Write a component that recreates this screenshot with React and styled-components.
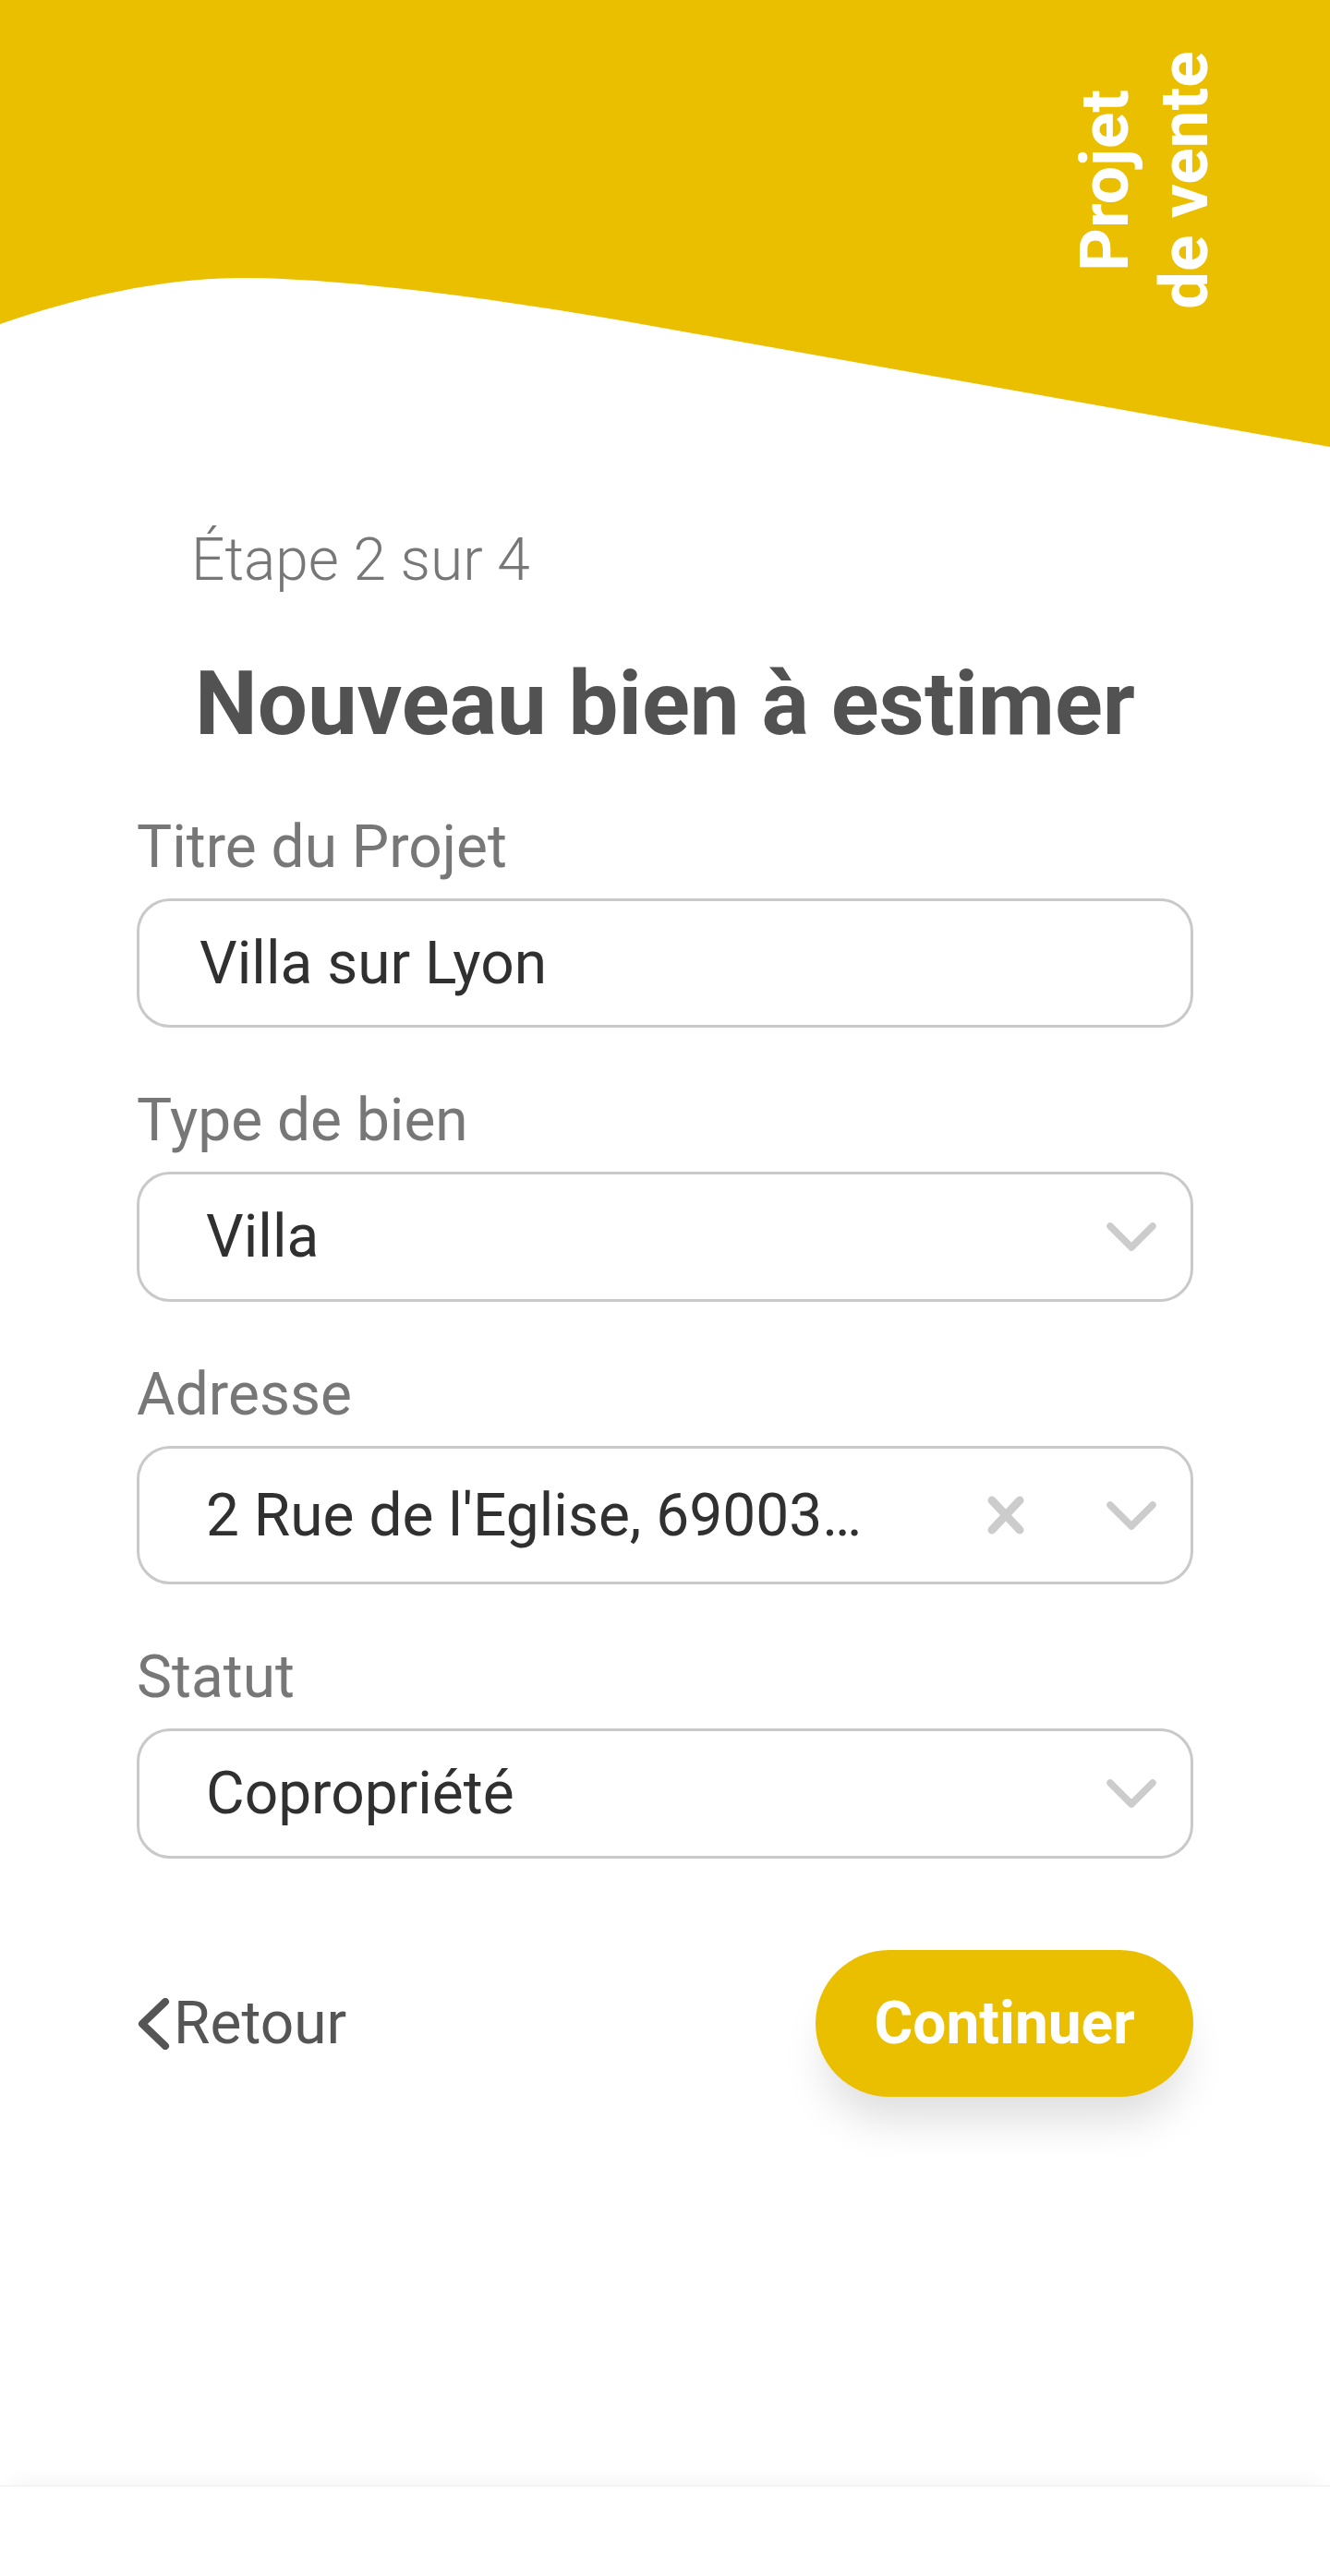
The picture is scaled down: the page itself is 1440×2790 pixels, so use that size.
import styled, { createGlobalStyle } from "styled-components";

const YELLOW = "#EABF00";

const GlobalStyle = createGlobalStyle`
  * { box-sizing: border-box; }
  body {
    margin: 0;
    background: #fff;
    font-family: Roboto, "Noto Sans", sans-serif;
  }
`;

export default function App() {
  return (
    <>
      <GlobalStyle />
      <Page>
        <Header>
          <Wave viewBox="0 0 1440 490" preserveAspectRatio="none">
            <path
              d="M0 0 H1440 V484 L700 352 C520 320 360 301 264 301 C180 301 90 320 0 351 Z"
              fill={YELLOW}
            />
          </Wave>
          <SideTitle>
            Projet
            <br />
            de vente
          </SideTitle>
        </Header>

        <Main>
          <Step>Étape 2 sur 4</Step>
          <Title>Nouveau bien à estimer</Title>

          <Form>
            <Field>
              <Label>Titre du Projet</Label>
              <TextInput value="Villa sur Lyon" readOnly />
            </Field>

            <Field>
              <Label>Type de bien</Label>
              <SelectBox>
                <SelectValue>Villa</SelectValue>
                <Chevron />
              </SelectBox>
            </Field>

            <Field>
              <Label>Adresse</Label>
              <SelectBox $tall>
                <SelectValue>2 Rue de l'Eglise, 69003…</SelectValue>
                <ClearIcon />
                <Chevron />
              </SelectBox>
            </Field>

            <Field>
              <Label>Statut</Label>
              <SelectBox>
                <SelectValue>Copropriété</SelectValue>
                <Chevron />
              </SelectBox>
            </Field>
          </Form>

          <Actions>
            <BackButton>
              <svg width="36" height="56" viewBox="0 0 36 56">
                <polyline
                  points="31,4 6,28 31,52"
                  fill="none"
                  stroke="#555"
                  strokeWidth="8"
                  strokeLinecap="round"
                  strokeLinejoin="round"
                />
              </svg>
              Retour
            </BackButton>
            <ContinueButton>Continuer</ContinueButton>
          </Actions>
        </Main>

        <Footer />
      </Page>
    </>
  );
}

function Chevron() {
  return (
    <ChevronSvg width="60" height="33" viewBox="0 0 60 33">
      <polyline
        points="7,5 30,28 53,5"
        fill="none"
        stroke="#cccccc"
        strokeWidth="7.5"
        strokeLinecap="round"
        strokeLinejoin="round"
      />
    </ChevronSvg>
  );
}

function ClearIcon() {
  return (
    <ClearSvg width="40" height="42" viewBox="0 0 40 42">
      <g stroke="#cccccc" strokeWidth="9" strokeLinecap="round">
        <line x1="5" y1="5" x2="35" y2="37" />
        <line x1="35" y1="5" x2="5" y2="37" />
      </g>
    </ClearSvg>
  );
}

const Page = styled.div`
  min-height: 2790px;
  display: flex;
  flex-direction: column;
  background: #fff;
`;

const Header = styled.header`
  position: relative;
  height: 490px;
`;

const Wave = styled.svg`
  display: block;
  width: 100%;
  height: 490px;
`;

const SideTitle = styled.div`
  position: absolute;
  left: 1153px;
  top: 42px;
  height: 306px;
  writing-mode: vertical-rl;
  transform: rotate(180deg);
  text-align: center;
  color: #fff;
  font-weight: 700;
  font-size: 73px;
  line-height: 86px;
`;

const Main = styled.main`
  padding: 79px 148px 0;
  display: flex;
  flex-direction: column;
`;

const Step = styled.p`
  margin: 0;
  padding-left: 59px;
  font-weight: 300;
  font-size: 64px;
  line-height: 75px;
  color: #777;
`;

const Title = styled.h1`
  margin: 62px 0 62px;
  text-align: center;
  font-weight: 700;
  font-size: 96px;
  line-height: 112px;
  color: #525252;
`;

const Form = styled.div`
  display: flex;
  flex-direction: column;
  gap: 63px;
`;

const Field = styled.div`
  display: flex;
  flex-direction: column;
`;

const Label = styled.label`
  font-size: 64px;
  line-height: 75px;
  color: #777;
  margin-bottom: 18px;
`;

const TextInput = styled.input`
  height: 140px;
  width: 100%;
  border: 3px solid #c9c9c9;
  border-radius: 36px;
  padding: 0 40px 0 65px;
  font-family: Roboto, "Noto Sans", sans-serif;
  font-size: 64px;
  color: #303030;
  background: #fff;
  outline: none;
`;

const SelectBox = styled.div`
  height: ${(p) => (p.$tall ? "150px" : "141px")};
  border: 3px solid #c9c9c9;
  border-radius: 36px;
  padding: 0 34px 0 72px;
  display: flex;
  align-items: center;
`;

const SelectValue = styled.span`
  flex: 1;
  font-size: 64px;
  color: #303030;
  white-space: nowrap;
  overflow: hidden;
`;

const ClearSvg = styled.svg`
  flex-shrink: 0;
  margin: 0 86px 0 20px;
`;

const ChevronSvg = styled.svg`
  flex-shrink: 0;
  display: block;
`;

const Actions = styled.div`
  margin-top: 99px;
  display: flex;
  justify-content: space-between;
  align-items: center;
`;

const BackButton = styled.button`
  display: flex;
  align-items: center;
  gap: 4px;
  padding: 0;
  border: none;
  background: none;
  font-family: Roboto, "Noto Sans", sans-serif;
  font-size: 64px;
  color: #555;
  cursor: pointer;
`;

const ContinueButton = styled.button`
  width: 409px;
  height: 159px;
  border: none;
  border-radius: 80px;
  background: ${YELLOW};
  color: #fff;
  font-family: Roboto, "Noto Sans", sans-serif;
  font-weight: 700;
  font-size: 64px;
  box-shadow: 0 36px 46px -10px rgba(0, 0, 0, 0.13);
  cursor: pointer;
`;

const Footer = styled.footer`
  margin-top: auto;
  height: 98px;
  background: #fff;
  border-top: 1px solid #f0f0f0;
  box-shadow: 0 -16px 24px -14px rgba(0, 0, 0, 0.06);
`;
